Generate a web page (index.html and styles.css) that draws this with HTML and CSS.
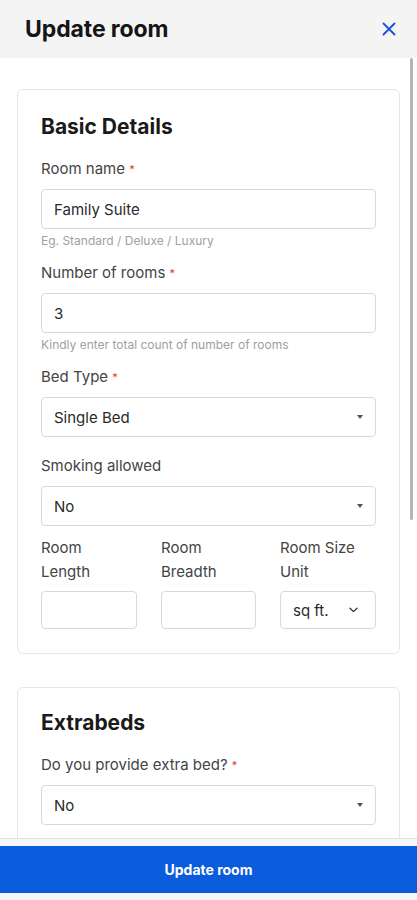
FILE: index.html
```html
<!DOCTYPE html>
<html lang="en">
<head>
<meta charset="utf-8">
<title>Update room</title>
<link rel="stylesheet" href="styles.css">
</head>
<body>
<div class="app">
  <header class="topbar">
    <h1 class="topbar-title">Update room</h1>
    <button class="close-btn" aria-label="Close">
      <svg width="14" height="14" viewBox="0 0 14 14"><path d="M1.5 1.5 L12.5 12.5 M12.5 1.5 L1.5 12.5" stroke="#1a4fd6" stroke-width="1.8" stroke-linecap="round" fill="none"/></svg>
    </button>
  </header>
  <main class="content">
    <section class="card">
      <h2 class="card-title">Basic Details</h2>
      <div class="field with-help">
        <label class="label">Room name <span class="req">*</span></label>
        <div class="input">Family Suite</div>
        <div class="help">Eg. Standard / Deluxe / Luxury</div>
      </div>
      <div class="field with-help">
        <label class="label">Number of rooms <span class="req">*</span></label>
        <div class="input">3</div>
        <div class="help">Kindly enter total count of number of rooms</div>
      </div>
      <div class="field">
        <label class="label">Bed Type <span class="req">*</span></label>
        <div class="input select">Single Bed<span class="caret"></span></div>
      </div>
      <div class="field field-tight">
        <label class="label">Smoking allowed</label>
        <div class="input select">No<span class="caret"></span></div>
      </div>
      <div class="cols">
        <div class="col">
          <label class="col-label">Room<br>Length</label>
          <div class="input small"></div>
        </div>
        <div class="col">
          <label class="col-label">Room<br>Breadth</label>
          <div class="input small"></div>
        </div>
        <div class="col">
          <label class="col-label">Room Size<br>Unit</label>
          <div class="input small unit">sq ft.
            <svg class="chev" width="9" height="6" viewBox="0 0 9 6"><path d="M1 1.2 L4.5 4.6 L8 1.2" stroke="#333" stroke-width="1.3" fill="none" stroke-linecap="round" stroke-linejoin="round"/></svg>
          </div>
        </div>
      </div>
    </section>
    <section class="card card-2">
      <h2 class="card-title">Extrabeds</h2>
      <div class="field">
        <label class="label">Do you provide extra bed? <span class="req">*</span></label>
        <div class="input select">No<span class="caret"></span></div>
      </div>
    </section>
  </main>
  <div class="scrollbar"></div>
  <footer class="footer">
    <button class="primary">Update room</button>
  </footer>
</div>
</body>
</html>
```

FILE: styles.css
```css
* { box-sizing: border-box; }
html, body { margin: 0; padding: 0; }
body {
  font-family: Inter, "Noto Sans", "Liberation Sans", sans-serif;
  color: #222;
  background: #fff;
}
.app {
  position: relative;
  width: 417px;
  height: 900px;
  overflow: hidden;
  display: flex;
  flex-direction: column;
}
.topbar {
  height: 58px;
  flex: none;
  background: #f4f4f4;
  display: flex;
  align-items: center;
  justify-content: space-between;
  padding: 0 21px 0 25px;
}
.topbar-title {
  margin: 0;
  font-size: 23px;
  font-weight: 700;
  color: #151515;
  letter-spacing: -0.1px;
}
.close-btn {
  border: 0;
  background: none;
  padding: 0;
  width: 14px;
  height: 14px;
  display: flex;
}
.content {
  flex: 1;
  overflow: hidden;
  padding: 31px 17px 0;
}
.card {
  border: 1px solid #e6e6e6;
  border-radius: 6px;
  padding: 23px 23px 24px;
  background: #fff;
}
.card-2 { margin-top: 33px; padding-top: 21px; }
.card-title {
  margin: 0 0 18px;
  font-size: 21px;
  line-height: 28px;
  font-weight: 700;
  color: #1a1a1a;
}
.field { margin-bottom: 19px; }
.field.with-help { margin-bottom: 15px; }
.field-tight { margin-bottom: 10px; }
.label {
  display: block;
  font-size: 15px;
  line-height: 20px;
  color: #444;
  margin-bottom: 10px;
}
.req { color: #e53935; font-size: 11px; vertical-align: top; }
.input {
  height: 40px;
  border: 1px solid #d9d9d9;
  border-radius: 4px;
  padding: 0 12px;
  display: flex;
  align-items: center;
  font-size: 15px;
  color: #2a2a2a;
  background: #fff;
  position: relative;
}
.select { justify-content: space-between; }
.caret {
  width: 0; height: 0;
  border-left: 3.5px solid transparent;
  border-right: 3.5px solid transparent;
  border-top: 4px solid #555;
}
.help {
  margin-top: 5px;
  font-size: 12px;
  line-height: 14px;
  color: #a0a0a0;
}
.cols {
  display: grid;
  grid-template-columns: 96px 95px 96px;
  column-gap: 24px;
}
.col-label {
  display: block;
  font-size: 15px;
  line-height: 24px;
  color: #444;
  margin-bottom: 7px;
}
.input.small { height: 38px; }
.unit { justify-content: space-between; padding-right: 17px; }
.scrollbar {
  position: absolute;
  right: 4px;
  top: 58px;
  width: 3px;
  height: 462px;
  background: #b5b5b5;
  border-radius: 2px;
}
.footer {
  flex: none;
  height: 62px;
  border-top: 1px solid #e2e2e2;
  background: #f7f7f7;
  padding-top: 7px;
  position: absolute;
  left: 0; right: 0; bottom: 0;
}
.primary {
  display: block;
  width: 100%;
  height: 47px;
  border: 0;
  background: #0a5cdc;
  color: #fff;
  font-family: Inter, "Noto Sans", "Liberation Sans", sans-serif;
  font-size: 14px;
  font-weight: 700;
}
```
